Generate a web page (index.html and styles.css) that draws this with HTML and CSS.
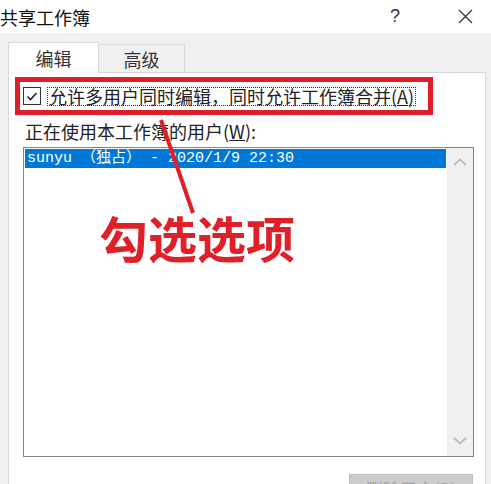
FILE: index.html
```html
<!DOCTYPE html>
<html lang="zh">
<head>
  <meta charset="UTF-8">
  <meta name="viewport" content="width=device-width, initial-scale=1.0">
  <title>共享工作簿</title>
  <link rel="stylesheet" href="styles.css">
</head>
<body>
  <div class="titlebar">
    <span class="title">共享工作簿</span>
    <span class="help">?</span>
    <span class="close">
      <svg viewBox="0 0 15 15" width="15" height="15">
        <path d="M1 1 L14 14 M14 1 L1 14" stroke="#333" stroke-width="1.2" fill="none"/>
      </svg>
    </span>
  </div>

  <div class="dialog">
    <div class="tabs">
      <div class="tab active">编辑</div>
      <div class="tab">高级</div>
    </div>

    <div class="panel">
      <div class="mark">
        <label class="check-row">
          <span class="checkbox">
            <svg viewBox="0 0 16 16" width="16" height="16">
              <path d="M3.5 8.5 L6.5 11.5 L12.5 5" stroke="#222" stroke-width="1.6" fill="none"/>
            </svg>
          </span>
          <span class="focus">允许多用户同时编辑，同时允许工作簿合并(<u>A</u>)</span>
        </label>
      </div>

      <div class="users-label">正在使用本工作簿的用户(<u>W</u>):</div>

      <div class="listbox">
        <div class="items">
          <div class="item selected">sunyu （独占） - 2020/1/9 22:30</div>
        </div>
        <div class="scrollbar">
          <svg viewBox="0 0 14 8" width="14" height="8">
            <path d="M1 7 L7 1.5 L13 7" stroke="#bdbdbd" stroke-width="2" fill="none"/>
          </svg>
          <svg viewBox="0 0 14 8" width="14" height="8">
            <path d="M1 1 L7 6.5 L13 1" stroke="#bdbdbd" stroke-width="2" fill="none"/>
          </svg>
        </div>
      </div>

      <div class="actions">
        <button disabled>删除用户(R)</button>
      </div>
    </div>
  </div>

  <!-- red annotation drawn over the dialog -->
  <svg class="pointer" width="491" height="484" viewBox="0 0 491 484">
    <line x1="161" y1="120" x2="193" y2="213" stroke="#df2029" stroke-width="4"/>
  </svg>
  <div class="callout">勾选选项</div>
</body>
</html>
```

FILE: styles.css
```css
html, body { margin: 0; padding: 0; }
body { position: relative; width: 491px; height: 484px; overflow: hidden; background: #f0f0f0; font-family: "Noto Sans CJK SC", "Liberation Sans", sans-serif; color: #222; }

.titlebar { display: flex; align-items: center; height: 33px; background: #fff; padding-right: 6px; }
.title { font-size: 18px; line-height: 30px; color: #111; }
.help { margin-left: auto; width: 20px; text-align: center; font-family: "Liberation Sans", sans-serif; font-size: 18px; color: #333; }
.close { display: flex; justify-content: center; align-items: center; width: 40px; margin-left: 40px; }

.dialog { padding: 9px 5px 0 8px; }
.tabs { display: flex; align-items: flex-end; height: 30px; }
.tab { font-size: 18px; color: #333; text-align: center; border: 1px solid #d9d9d9; border-bottom: none; box-sizing: border-box; }
.tab.active { position: relative; z-index: 1; width: 91px; height: 31px; line-height: 30px; margin-bottom: -1px; background: #fff; }
.tab:not(.active) { width: 86px; height: 28px; line-height: 28px; border-left: none; background: #f0f0f0; }

.panel { background: #fff; border: 1px solid #d9d9d9; height: 440px; padding: 4px 0 0 6px; }

.mark { box-sizing: border-box; width: 418px; height: 38px; border: 5px solid #dd1f29; }
.check-row { display: flex; align-items: center; height: 28px; padding-left: 3px; }
.checkbox { display: flex; justify-content: center; align-items: center; box-sizing: border-box; width: 18px; height: 18px; border: 1px solid #333; background: #fff; }
.focus { margin-left: 6px; padding: 0 1px; border: 1px dotted #333; font-size: 18px; line-height: 17px; color: #222; }

.users-label { margin: 6px 0 0 10px; font-size: 18px; line-height: 20px; color: #222; }

.listbox { display: flex; box-sizing: border-box; width: 451px; height: 310px; margin: 6px 0 0 8px; border: 1px solid #828282; background: #fff; }
.items { flex: 1; padding: 1px; }
.item { height: 19px; line-height: 19px; padding-left: 2px; font-family: "Liberation Mono", "Noto Sans CJK SC", monospace; font-size: 15px; white-space: nowrap; }
.item.selected { background: #0078d7; color: #fff; }
.scrollbar { display: flex; flex-direction: column; justify-content: space-between; align-items: center; width: 26px; padding: 10px 0 11px; background: #f0f0f0; }

.actions { display: flex; justify-content: flex-end; margin: 17px 12px 0 0; }
button { width: 124px; height: 28px; background: #cccccc; border: 1px solid #bfbfbf; color: #a3a3a3; font-family: inherit; font-size: 17px; }

.pointer { position: absolute; left: 0; top: 0; }
.callout { position: absolute; left: 99px; top: 212px; font-size: 49px; line-height: 50px; font-weight: bold; color: #df2029; white-space: nowrap; }
```
